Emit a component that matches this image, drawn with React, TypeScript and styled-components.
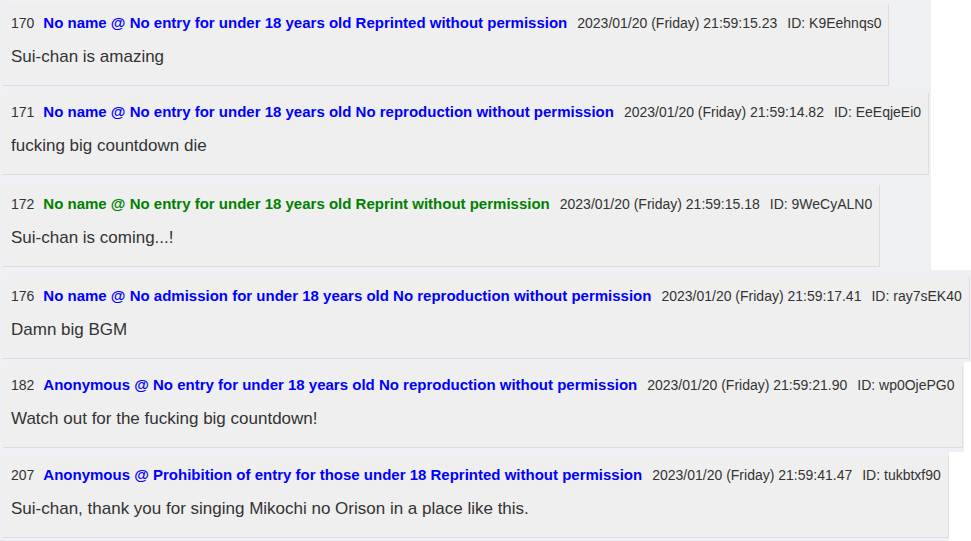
import React from 'react';
import styled, { createGlobalStyle } from 'styled-components';

interface Post {
  no: number;
  name: string;
  date: string;
  id: string;
  body: string;
  green?: boolean;
  stripWidth: number;
  stripHeight: number;
  padTop?: number;
}

const posts: Post[] = [
  {
    no: 170,
    name: 'No name @ No entry for under 18 years old Reprinted without permission',
    date: '2023/01/20 (Friday) 21:59:15.23',
    id: 'K9Eehnqs0',
    body: 'Sui-chan is amazing',
    stripWidth: 931,
    stripHeight: 89,
  },
  {
    no: 171,
    name: 'No name @ No entry for under 18 years old No reproduction without permission',
    date: '2023/01/20 (Friday) 21:59:14.82',
    id: 'EeEqjeEi0',
    body: 'fucking big countdown die',
    stripWidth: 931,
    stripHeight: 92,
  },
  {
    no: 172,
    name: 'No name @ No entry for under 18 years old Reprint without permission',
    date: '2023/01/20 (Friday) 21:59:15.18',
    id: '9WeCyALN0',
    body: 'Sui-chan is coming...!',
    green: true,
    stripWidth: 931,
    stripHeight: 89,
  },
  {
    no: 176,
    name: 'No name @ No admission for under 18 years old No reproduction without permission',
    date: '2023/01/20 (Friday) 21:59:17.41',
    id: 'ray7sEK40',
    body: 'Damn big BGM',
    stripWidth: 971,
    stripHeight: 92,
    padTop: 7,
  },
  {
    no: 182,
    name: 'Anonymous @ No entry for under 18 years old No reproduction without permission',
    date: '2023/01/20 (Friday) 21:59:21.90',
    id: 'wp0OjePG0',
    body: 'Watch out for the fucking big countdown!',
    stripWidth: 964,
    stripHeight: 90,
  },
  {
    no: 207,
    name: 'Anonymous @ Prohibition of entry for those under 18 Reprinted without permission',
    date: '2023/01/20 (Friday) 21:59:41.47',
    id: 'tukbtxf90',
    body: 'Sui-chan, thank you for singing Mikochi no Orison in a place like this.',
    stripWidth: 949,
    stripHeight: 89,
  },
];

const App: React.FC = () => {
  return (
    <>
      <GlobalStyle />
      <Page>
        {posts.map((p) => (
          <Strip
            key={p.no}
            $width={p.stripWidth}
            $height={p.stripHeight}
            $padTop={p.padTop ?? 4}
          >
            <Card>
              <Header>
                <Num>{p.no}</Num>
                <Name $green={p.green}>{p.name}</Name>
                <Meta>{p.date}</Meta>
                <Meta>ID: {p.id}</Meta>
              </Header>
              <Message>{p.body}</Message>
            </Card>
          </Strip>
        ))}
      </Page>
    </>
  );
};

export default App;

// --- styled-components ---
const GlobalStyle = createGlobalStyle`
  html, body {
    margin: 0;
    padding: 0;
    background: #ffffff;
  }
  body {
    font-family: 'Liberation Sans', Arial, sans-serif;
    color: #333333;
  }
`;

const Page = styled.div`
  display: flex;
  flex-direction: column;
  align-items: flex-start;
`;

const Strip = styled.div<{ $width: number; $height: number; $padTop: number }>`
  box-sizing: border-box;
  width: ${(p) => p.$width}px;
  height: ${(p) => p.$height}px;
  background: #eff0f4;
  padding: ${(p) => p.$padTop}px 0 0 3px;
`;

const Card = styled.div`
  box-sizing: border-box;
  display: inline-block;
  height: 82px;
  background: #efefef;
  border-right: 1px solid #dddddd;
  border-bottom: 1px solid #dddddd;
  padding: 10px 7px 0 8px;
  white-space: nowrap;
`;

const Header = styled.div`
  display: flex;
  align-items: baseline;
  line-height: 18px;
`;

const Num = styled.span`
  font-size: 14px;
  color: #333333;
  margin-right: 9px;
`;

const Name = styled.span<{ $green?: boolean }>`
  font-size: 15px;
  font-weight: 700;
  color: ${(p) => (p.$green ? '#008000' : '#0000ff')};
  margin-right: 10px;
`;

const Meta = styled.span`
  font-size: 14px;
  color: #333333;
  margin-right: 10px;

  &:last-child {
    margin-right: 0;
  }
`;

const Message = styled.div`
  margin-top: 12px;
  font-size: 17px;
  line-height: 26px;
  color: #333333;
`;
